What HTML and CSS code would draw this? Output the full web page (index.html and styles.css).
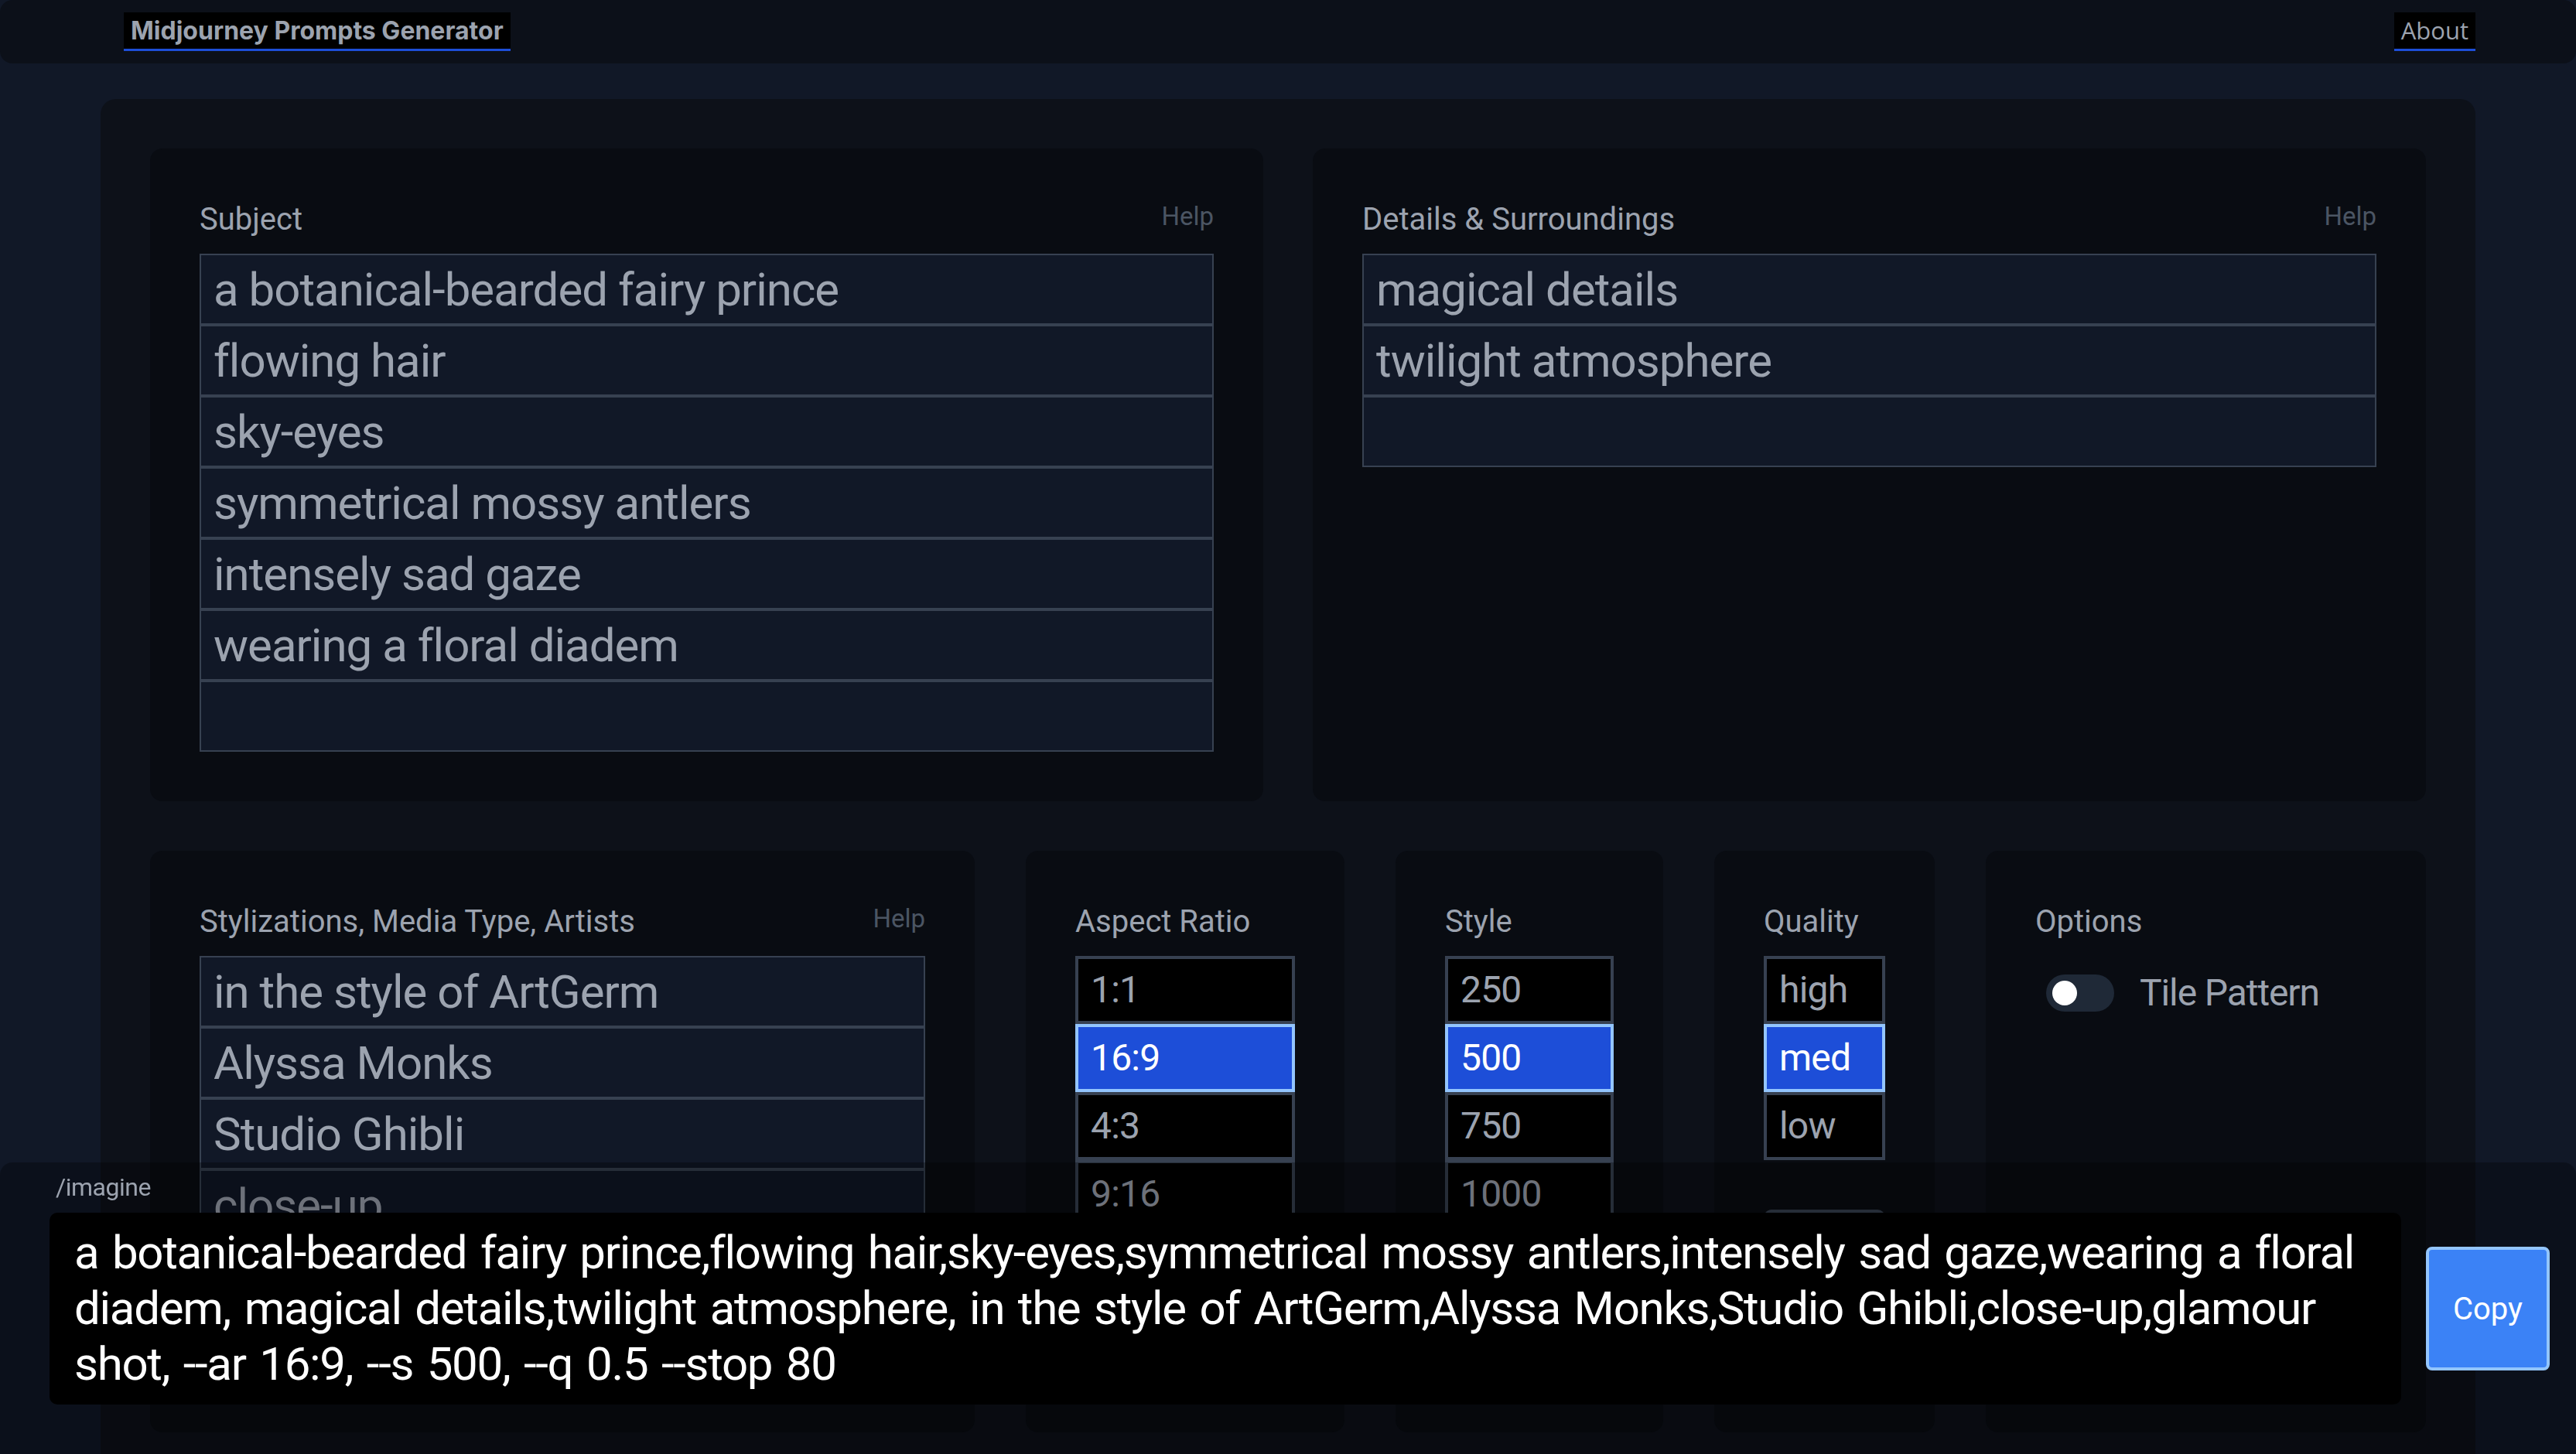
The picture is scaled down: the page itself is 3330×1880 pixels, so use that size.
FILE: index.html
```html
<!DOCTYPE html>
<html lang="en">
<head>
<meta charset="utf-8">
<title>Midjourney Prompts Generator</title>
<link rel="stylesheet" href="styles.css">
</head>
<body>
<header class="topbar">
  <a class="brand">Midjourney Prompts Generator</a>
  <a class="about">About</a>
</header>

<main class="container">
  <section class="row row-top">
    <div class="card">
      <div class="card-head"><span class="label">Subject</span><span class="help">Help</span></div>
      <div class="inputs">
        <input class="field" type="text" value="a botanical-bearded fairy prince">
        <input class="field" type="text" value="flowing hair">
        <input class="field" type="text" value="sky-eyes">
        <input class="field" type="text" value="symmetrical mossy antlers">
        <input class="field" type="text" value="intensely sad gaze">
        <input class="field" type="text" value="wearing a floral diadem">
        <input class="field" type="text" value="">
      </div>
    </div>
    <div class="card">
      <div class="card-head"><span class="label">Details &amp; Surroundings</span><span class="help">Help</span></div>
      <div class="inputs">
        <input class="field" type="text" value="magical details">
        <input class="field" type="text" value="twilight atmosphere">
        <input class="field" type="text" value="">
      </div>
    </div>
  </section>

  <section class="row row-bottom">
    <div class="card">
      <div class="card-head"><span class="label">Stylizations, Media Type, Artists</span><span class="help">Help</span></div>
      <div class="inputs">
        <input class="field" type="text" value="in the style of ArtGerm">
        <input class="field" type="text" value="Alyssa Monks">
        <input class="field" type="text" value="Studio Ghibli">
        <input class="field" type="text" value="close-up">
        <input class="field" type="text" value="glamour shot">
        <input class="field" type="text" value="">
      </div>
    </div>
    <div class="card">
      <div class="card-head"><span class="label">Aspect Ratio</span></div>
      <div class="choices">
        <button class="choice">1:1</button>
        <button class="choice is-active">16:9</button>
        <button class="choice">4:3</button>
        <button class="choice">9:16</button>
        <button class="choice">2:3</button>
        <button class="choice">3:2</button>
      </div>
    </div>
    <div class="card">
      <div class="card-head"><span class="label">Style</span></div>
      <div class="choices">
        <button class="choice">250</button>
        <button class="choice is-active">500</button>
        <button class="choice">750</button>
        <button class="choice">1000</button>
      </div>
    </div>
    <div class="card">
      <div class="card-head"><span class="label">Quality</span></div>
      <div class="choices">
        <button class="choice">high</button>
        <button class="choice is-active">med</button>
        <button class="choice">low</button>
      </div>
      <div class="stop">80</div>
    </div>
    <div class="card">
      <div class="card-head"><span class="label">Options</span></div>
      <div class="option">
        <span class="toggle"><span class="knob"></span></span>
        <span class="option-text">Tile Pattern</span>
      </div>
    </div>
  </section>
</main>

<footer class="imagine-bar">
  <div class="imagine-label">/imagine</div>
  <div class="imagine-row">
    <textarea class="prompt" rows="3">a botanical-bearded fairy prince,flowing hair,sky-eyes,symmetrical mossy antlers,intensely sad gaze,wearing a floral diadem, magical details,twilight atmosphere, in the style of ArtGerm,Alyssa Monks,Studio Ghibli,close-up,glamour shot, --ar 16:9, --s 500, --q 0.5 --stop 80</textarea>
    <button class="copy">Copy</button>
  </div>
</footer>
</body>
</html>
```

FILE: styles.css
```css
* { box-sizing: border-box; }

html, body {
  margin: 0;
  padding: 0;
}

body {
  background: #111827;
  font-family: Roboto, "Noto Sans", sans-serif;
  color: #9ca3af;
}

.topbar {
  display: flex;
  justify-content: space-between;
  align-items: center;
  padding: 16px 130px 16px 160px;
  background: #0c1019;
  border-radius: 16px;
}

.brand {
  display: block;
  background: #000;
  color: #9ca3af;
  font-family: Inter, Roboto, sans-serif;
  font-size: 32px;
  line-height: 47px;
  font-weight: 700;
  padding: 0 9px;
  border-bottom: 3px solid #1d4ed8;
}

.about {
  display: block;
  background: #000;
  color: #9ca3af;
  font-family: "Open Sans", Roboto, sans-serif;
  font-size: 31px;
  line-height: 47px;
  padding: 0 9px;
  border-bottom: 3px solid #1d4ed8;
}

.container {
  margin: 46px 130px 0 130px;
  padding: 64px;
  background: #0d1119;
  border-radius: 20px;
  display: flex;
  flex-direction: column;
  gap: 64px;
}

.row { display: grid; }
.row-top { grid-template-columns: 1fr 1fr; gap: 64px; }
.row-bottom { grid-template-columns: 1066px 412px 346px 285px 1fr; gap: 66px; }

.card {
  background: #090c12;
  border-radius: 16px;
  padding: 64px;
}

.card-head {
  display: flex;
  justify-content: space-between;
  align-items: flex-start;
  margin-bottom: 16px;
}

.label {
  font-size: 40px;
  line-height: 56px;
  color: #9ca3af;
}

.help {
  font-size: 33px;
  line-height: 48px;
  color: #4b5563;
}

.inputs { display: flex; flex-direction: column; }

.field {
  display: block;
  width: 100%;
  height: 92px;
  margin: 0;
  padding: 8px 16px;
  border: 2px solid #374151;
  background: #111827;
  color: #9ca3af;
  font-family: Roboto, "Noto Sans", sans-serif;
  font-size: 60px;
  line-height: 72px;
  letter-spacing: -1px;
  outline: none;
}

.choices { display: flex; flex-direction: column; }

.choice {
  display: block;
  width: 100%;
  height: 88px;
  margin: 0;
  padding: 8px 16px;
  border: 4px solid #374151;
  background: #000;
  color: #9ca3af;
  font-family: Roboto, "Noto Sans", sans-serif;
  font-size: 48px;
  line-height: 64px;
  letter-spacing: -0.8px;
  text-align: left;
}

.choice.is-active {
  background: #1d4ed8;
  border-color: #93c5fd;
  color: #fff;
}

.stop {
  margin-top: 64px;
  height: 88px;
  border-radius: 10px;
  background: #374151;
  color: #d1d5db;
  font-size: 48px;
  line-height: 88px;
  padding: 0 16px;
}

.option {
  display: flex;
  align-items: center;
  padding: 16px 0 16px 14px;
  gap: 33px;
}

.toggle {
  display: flex;
  align-items: center;
  width: 88px;
  height: 48px;
  border-radius: 24px;
  background: #1f2937;
  padding: 0 8px;
}

.knob {
  width: 32px;
  height: 32px;
  border-radius: 50%;
  background: #fff;
}

.option-text {
  font-size: 48px;
  line-height: 64px;
  letter-spacing: -1.1px;
  color: #9ca3af;
}

.imagine-bar {
  position: fixed;
  left: 0;
  right: 0;
  bottom: 0;
  padding: 8px 34px 64px 64px;
  background: rgba(0, 0, 0, 0.3);
  border-radius: 16px 16px 0 0;
}

.imagine-label {
  font-size: 32px;
  line-height: 48px;
  letter-spacing: -0.5px;
  margin: 0 0 9px 8px;
  color: #9ca3af;
}

.imagine-row {
  display: flex;
  align-items: center;
  gap: 32px;
}

.prompt {
  flex: 1;
  height: 248px;
  margin: 0;
  padding: 16px 32px;
  border: 0;
  border-radius: 10px;
  background: #000;
  color: #fff;
  font-family: Roboto, "Noto Sans", sans-serif;
  font-size: 60px;
  line-height: 72px;
  letter-spacing: -1.3px;
  word-spacing: 4px;
  resize: none;
  overflow: hidden;
  outline: none;
}

.copy {
  width: 160px;
  height: 160px;
  border: 4px solid #93c5fd;
  border-radius: 8px;
  background: #3b82f6;
  color: #fff;
  font-family: Roboto, "Noto Sans", sans-serif;
  font-size: 40px;
}
```
